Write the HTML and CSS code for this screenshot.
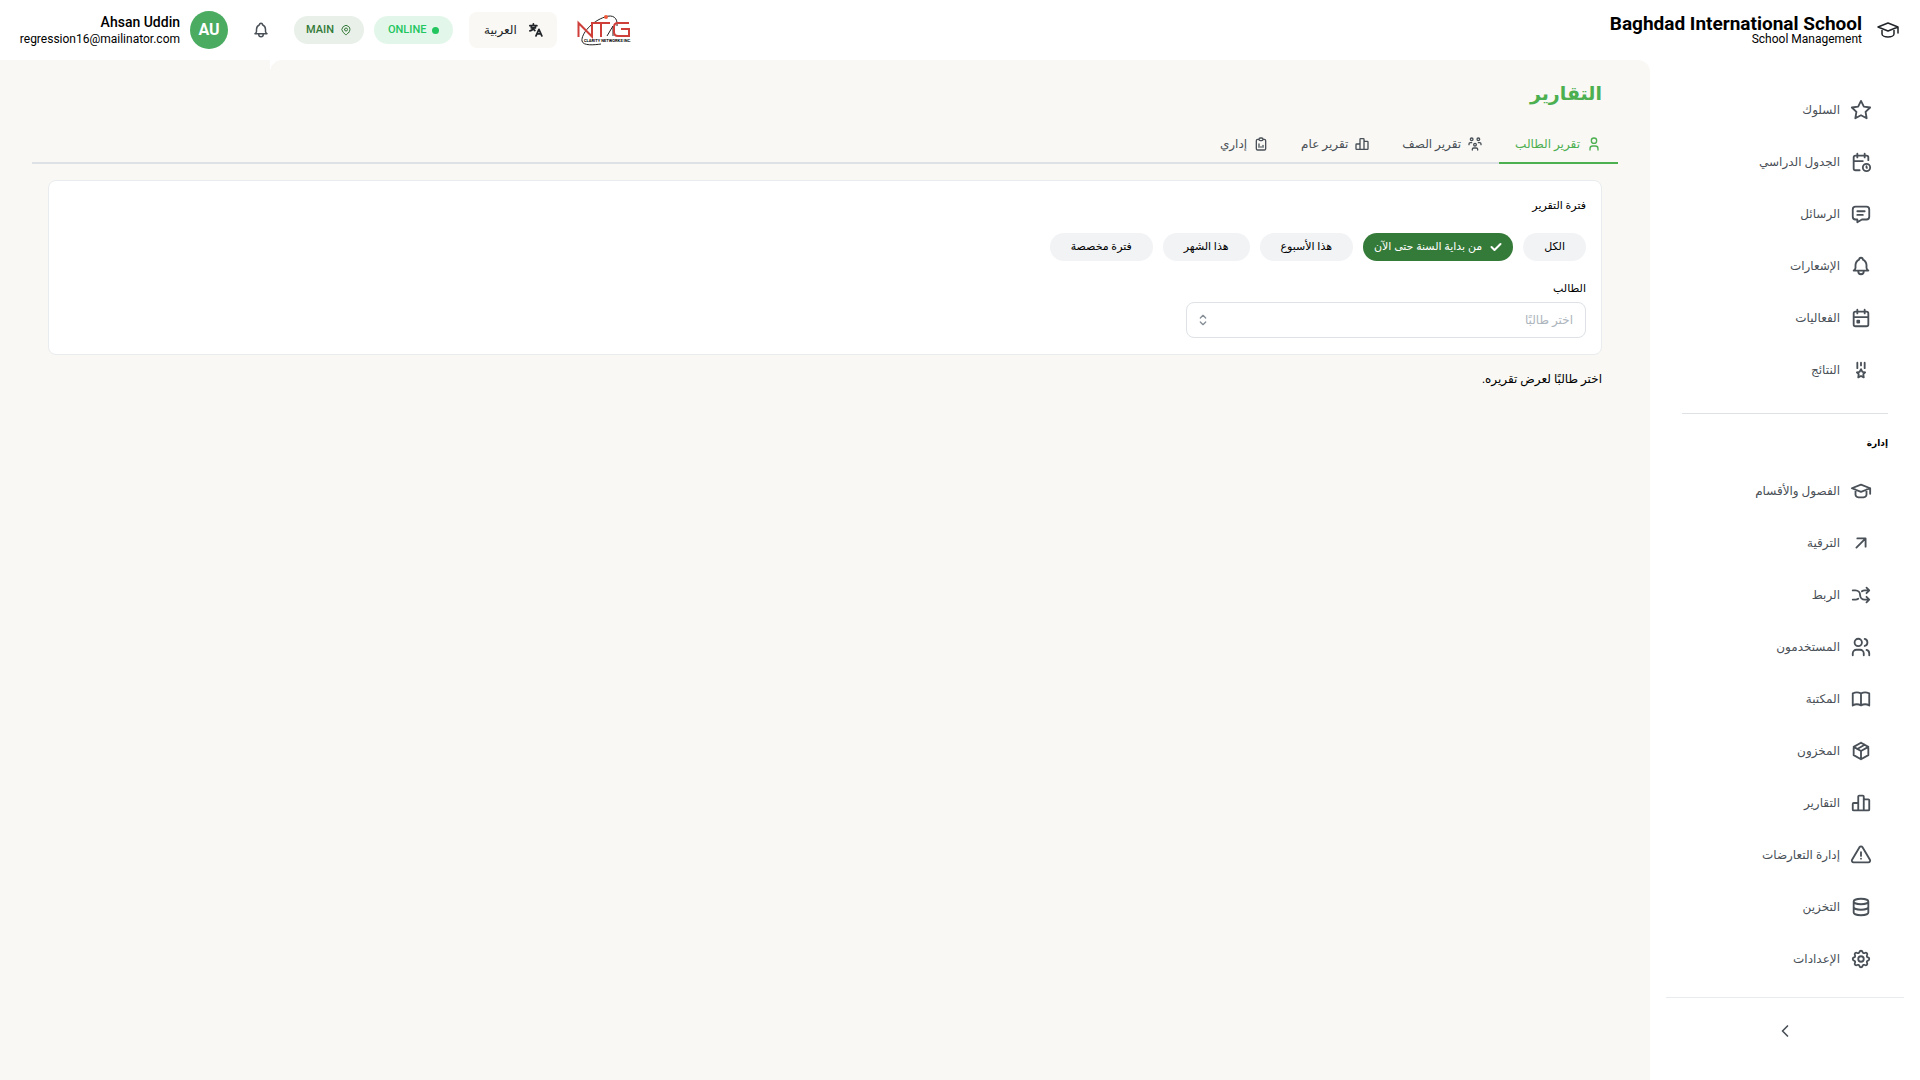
FILE: index.html
```html
<!DOCTYPE html>
<html lang="ar" dir="rtl">
<head>
<meta charset="utf-8">
<title>التقارير</title>
<link rel="stylesheet" href="styles.css">
</head>
<body>
<svg class="sprite" aria-hidden="true">
  <symbol id="star" viewBox="0 0 24 24"><path d="M12 17.75l-6.172 3.245l1.179 -6.873l-5 -4.867l6.9 -1l3.086 -6.253l3.086 6.253l6.9 1l-5 4.867l1.179 6.873z"/></symbol>
  <symbol id="calendar-clock" viewBox="0 0 24 24"><path d="M10.5 21h-4.5a2 2 0 0 1 -2 -2v-12a2 2 0 0 1 2 -2h12a2 2 0 0 1 2 2v3M16 3v4M8 3v4M4 11h10M14 18a4 4 0 1 0 8 0a4 4 0 1 0 -8 0M18 16.5v1.5l.5 .5"/></symbol>
  <symbol id="message" viewBox="0 0 24 24"><path d="M8 9h8M8 13h6M18 4a3 3 0 0 1 3 3v8a3 3 0 0 1 -3 3h-5l-5 3v-3h-2a3 3 0 0 1 -3 -3v-8a3 3 0 0 1 3 -3h12z"/></symbol>
  <symbol id="bell" viewBox="0 0 24 24"><path d="M10 5a2 2 0 1 1 4 0a7 7 0 0 1 4 6v3a4 4 0 0 0 2 3h-16a4 4 0 0 0 2 -3v-3a7 7 0 0 1 4 -6M9 17v1a3 3 0 0 0 6 0v-1"/></symbol>
  <symbol id="calendar-event" viewBox="0 0 24 24"><path d="M4 7a2 2 0 0 1 2 -2h12a2 2 0 0 1 2 2v12a2 2 0 0 1 -2 2h-12a2 2 0 0 1 -2 -2zM16 3v4M8 3v4M4 11h16M8 15h2v2h-2z"/></symbol>
  <symbol id="medal" viewBox="0 0 24 24"><path d="M12 4v3M8 4v6M16 4v6M12 18.5l-3 1.5l.5 -3.5l-2 -2l3 -.5l1.5 -3l1.5 3l3 .5l-2 2l.5 3.5z"/></symbol>
  <symbol id="school" viewBox="0 0 24 24"><path d="M22 9l-10 -4l-10 4l10 4l10 -4v6M6 10.6v5.4a6 3 0 0 0 12 0v-5.4"/></symbol>
  <symbol id="arrow-up-right" viewBox="0 0 24 24"><path d="M17 7l-10 10M8 7h9v9"/></symbol>
  <symbol id="shuffle" viewBox="0 0 24 24"><path d="M18 4l3 3l-3 3M18 20l3 -3l-3 -3M3 7h3a5 5 0 0 1 5 5a5 5 0 0 0 5 5h5M21 7h-5a4.978 4.978 0 0 0 -3 1m-4 8a4.984 4.984 0 0 1 -3 1h-3"/></symbol>
  <symbol id="users" viewBox="0 0 24 24"><path d="M5 7a4 4 0 1 0 8 0a4 4 0 1 0 -8 0M3 21v-2a4 4 0 0 1 4 -4h4a4 4 0 0 1 4 4v2M16 3.13a4 4 0 0 1 0 7.75M21 21v-2a4 4 0 0 0 -3 -3.85"/></symbol>
  <symbol id="book" viewBox="0 0 24 24"><path d="M3 19a9 9 0 0 1 9 0a9 9 0 0 1 9 0M3 6a9 9 0 0 1 9 0a9 9 0 0 1 9 0M3 6v13M12 6v13M21 6v13"/></symbol>
  <symbol id="package" viewBox="0 0 24 24"><path d="M12 3l8 4.5v9l-8 4.5l-8 -4.5v-9l8 -4.5M12 12l8 -4.5M12 12v9M12 12l-8 -4.5M16 5.25l-8 4.5"/></symbol>
  <symbol id="chart-bar" viewBox="0 0 24 24"><path d="M3 13a1 1 0 0 1 1 -1h4a1 1 0 0 1 1 1v6a1 1 0 0 1 -1 1h-4a1 1 0 0 1 -1 -1zM15 9a1 1 0 0 1 1 -1h4a1 1 0 0 1 1 1v10a1 1 0 0 1 -1 1h-4a1 1 0 0 1 -1 -1zM9 5a1 1 0 0 1 1 -1h4a1 1 0 0 1 1 1v14a1 1 0 0 1 -1 1h-4a1 1 0 0 1 -1 -1zM4 20h14"/></symbol>
  <symbol id="alert" viewBox="0 0 24 24"><path d="M12 9v4M10.363 3.591l-8.106 13.534a1.914 1.914 0 0 0 1.636 2.871h16.214a1.914 1.914 0 0 0 1.636 -2.87l-8.106 -13.536a1.914 1.914 0 0 0 -3.274 0zM12 16h.01"/></symbol>
  <symbol id="database" viewBox="0 0 24 24"><path d="M4 6a8 3 0 1 0 16 0a8 3 0 1 0 -16 0M4 6v6a8 3 0 0 0 16 0v-6M4 12v6a8 3 0 0 0 16 0v-6"/></symbol>
  <symbol id="settings" viewBox="0 0 24 24"><path d="M10.325 4.317c.426 -1.756 2.924 -1.756 3.35 0a1.724 1.724 0 0 0 2.573 1.066c1.543 -.94 3.31 .826 2.37 2.37a1.724 1.724 0 0 0 1.065 2.572c1.756 .426 1.756 2.924 0 3.35a1.724 1.724 0 0 0 -1.066 2.573c.94 1.543 -.826 3.31 -2.37 2.37a1.724 1.724 0 0 0 -2.572 1.065c-.426 1.756 -2.924 1.756 -3.35 0a1.724 1.724 0 0 0 -2.573 -1.066c-1.543 .94 -3.31 -.826 -2.37 -2.37a1.724 1.724 0 0 0 -1.065 -2.572c-1.756 -.426 -1.756 -2.924 0 -3.35a1.724 1.724 0 0 0 1.066 -2.573c-.94 -1.543 .826 -3.31 2.37 -2.37c1 .608 2.296 .07 2.572 -1.065zM9 12a3 3 0 1 0 6 0a3 3 0 0 0 -6 0"/></symbol>
  <symbol id="user" viewBox="0 0 24 24"><path d="M8 7a4 4 0 1 0 8 0a4 4 0 0 0 -8 0M6 21v-2a4 4 0 0 1 4 -4h4a4 4 0 0 1 4 4v2"/></symbol>
  <symbol id="users-group" viewBox="0 0 24 24"><path d="M10 13a2 2 0 1 0 4 0a2 2 0 0 0 -4 0M8 21v-1a2 2 0 0 1 2 -2h4a2 2 0 0 1 2 2v1M15 5a2 2 0 1 0 4 0a2 2 0 0 0 -4 0M17 10h2a2 2 0 0 1 2 2v1M5 5a2 2 0 1 0 4 0a2 2 0 0 0 -4 0M3 13v-1a2 2 0 0 1 2 -2h2"/></symbol>
  <symbol id="report" viewBox="0 0 24 24"><path d="M9 5h-2a2 2 0 0 0 -2 2v12a2 2 0 0 0 2 2h10a2 2 0 0 0 2 -2v-12a2 2 0 0 0 -2 -2h-2M9 5a2 2 0 0 1 2 -2h2a2 2 0 0 1 2 2a2 2 0 0 1 -2 2h-2a2 2 0 0 1 -2 -2M9 17v-5M12 17v-1M15 17v-3"/></symbol>
  <symbol id="pin" viewBox="0 0 24 24"><path d="M9 11a3 3 0 1 0 6 0a3 3 0 0 0 -6 0M17.657 16.657l-4.243 4.243a2 2 0 0 1 -2.827 0l-4.244 -4.243a8 8 0 1 1 11.314 0z"/></symbol>
  <symbol id="chevron-left" viewBox="0 0 24 24"><path d="M15 6l-6 6l6 6"/></symbol>
  <symbol id="selector" viewBox="0 0 24 24"><path d="M8 9l4 -4l4 4M16 15l-4 4l-4 -4"/></symbol>
  <symbol id="check" viewBox="0 0 24 24"><path d="M3 12l6 6l12 -12"/></symbol>
  <symbol id="translate" viewBox="0 0 24 24"><path d="M1.500 4.500h12M7.500 1.500v3M4 5v3.500h7V5M7.500 9c-1 2 -3 4 -6 4.500M7.500 9c0 2 1 3 2.500 4M12 22l5 -11l5 11M14 18.500h6"/></symbol>
</svg>

<header class="topbar">
  <div class="brand">
    <svg class="icon icon-brand"><use href="#school"/></svg>
    <div class="brand-text">
      <strong class="brand-name">Baghdad International School</strong>
      <span class="brand-sub">School Management</span>
    </div>
  </div>
  <div class="tools">
    <svg class="logo" viewBox="0 0 54 32" role="img" aria-label="NTG Clarity Networks Inc.">
      <path class="logo-orbit" d="M40 12C41 4 36 0 28 3C15 7 4 20 5 27C6 32 17 31 24 30"/>
      <path class="logo-orbit" d="M30 22L36 12V22"/>
      <path class="logo-mark" d="M1.500 23V9L15 22.500V9H33M24 9V23M52 9H41C38 9 37 10 37 13V18C37 21 38 22 41 22H52V15H44"/>
      <circle class="logo-dot" cx="29" cy="3" r="2"/>
      <text class="logo-text" x="7" y="28">CLARITY NETWORKS INC.</text>
    </svg>
    <button class="language" type="button"><svg class="icon icon-language"><use href="#translate"/></svg><span>العربية</span></button>
    <div class="badges">
      <span class="badge badge-online"><i class="dot"></i>ONLINE</span>
      <span class="badge badge-main"><svg class="icon icon-pin"><use href="#pin"/></svg>MAIN</span>
    </div>
    <button class="bell" type="button" aria-label="الإشعارات"><svg class="icon icon-bell"><use href="#bell"/></svg></button>
    <div class="account">
      <span class="avatar">AU</span>
      <div class="account-text">
        <span class="account-name">Ahsan Uddin</span>
        <span class="account-mail">regression16@mailinator.com</span>
      </div>
    </div>
  </div>
</header>

<div class="shell">
  <aside class="sidebar">
    <nav class="nav">
      <a class="nav-item" href="#"><svg class="icon icon-nav"><use href="#star"/></svg><span>السلوك</span></a>
      <a class="nav-item" href="#"><svg class="icon icon-nav"><use href="#calendar-clock"/></svg><span>الجدول الدراسي</span></a>
      <a class="nav-item" href="#"><svg class="icon icon-nav"><use href="#message"/></svg><span>الرسائل</span></a>
      <a class="nav-item" href="#"><svg class="icon icon-nav"><use href="#bell"/></svg><span>الإشعارات</span></a>
      <a class="nav-item" href="#"><svg class="icon icon-nav"><use href="#calendar-event"/></svg><span>الفعاليات</span></a>
      <a class="nav-item" href="#"><svg class="icon icon-nav"><use href="#medal"/></svg><span>النتائج</span></a>
      <hr class="nav-rule">
      <h2 class="nav-title">إدارة</h2>
      <a class="nav-item" href="#"><svg class="icon icon-nav"><use href="#school"/></svg><span>الفصول والأقسام</span></a>
      <a class="nav-item" href="#"><svg class="icon icon-nav"><use href="#arrow-up-right"/></svg><span>الترقية</span></a>
      <a class="nav-item" href="#"><svg class="icon icon-nav"><use href="#shuffle"/></svg><span>الربط</span></a>
      <a class="nav-item" href="#"><svg class="icon icon-nav"><use href="#users"/></svg><span>المستخدمون</span></a>
      <a class="nav-item" href="#"><svg class="icon icon-nav"><use href="#book"/></svg><span>المكتبة</span></a>
      <a class="nav-item" href="#"><svg class="icon icon-nav"><use href="#package"/></svg><span>المخزون</span></a>
      <a class="nav-item" href="#"><svg class="icon icon-nav"><use href="#chart-bar"/></svg><span>التقارير</span></a>
      <a class="nav-item" href="#"><svg class="icon icon-nav"><use href="#alert"/></svg><span>إدارة التعارضات</span></a>
      <a class="nav-item" href="#"><svg class="icon icon-nav"><use href="#database"/></svg><span>التخزين</span></a>
      <a class="nav-item" href="#"><svg class="icon icon-nav"><use href="#settings"/></svg><span>الإعدادات</span></a>
    </nav>
    <div class="sidebar-foot">
      <button class="collapse" type="button" aria-label="طي القائمة"><svg class="icon icon-collapse"><use href="#chevron-left"/></svg></button>
    </div>
  </aside>

  <main class="content">
    <h1 class="title">التقارير</h1>
    <div class="tabs" role="tablist">
      <button class="tab tab-active" type="button" role="tab" aria-selected="true"><svg class="icon icon-tab"><use href="#user"/></svg><span>تقرير الطالب</span></button>
      <button class="tab" type="button" role="tab"><svg class="icon icon-tab"><use href="#users-group"/></svg><span>تقرير الصف</span></button>
      <button class="tab" type="button" role="tab"><svg class="icon icon-tab"><use href="#chart-bar"/></svg><span>تقرير عام</span></button>
      <button class="tab" type="button" role="tab"><svg class="icon icon-tab"><use href="#report"/></svg><span>إداري</span></button>
    </div>
    <section class="card">
      <fieldset class="period">
        <legend class="label">فترة التقرير</legend>
        <div class="chips">
          <label class="chip"><input type="radio" name="period"><span>الكل</span></label>
          <label class="chip chip-on"><input type="radio" name="period" checked><svg class="icon icon-check"><use href="#check"/></svg><span>من بداية السنة حتى الآن</span></label>
          <label class="chip"><input type="radio" name="period"><span>هذا الأسبوع</span></label>
          <label class="chip"><input type="radio" name="period"><span>هذا الشهر</span></label>
          <label class="chip"><input type="radio" name="period"><span>فترة مخصصة</span></label>
        </div>
      </fieldset>
      <div class="field">
        <label class="label" for="student">الطالب</label>
        <div class="select">
          <input class="select-input" id="student" type="text" placeholder="اختر طالبًا">
          <svg class="icon icon-selector"><use href="#selector"/></svg>
        </div>
      </div>
    </section>
    <p class="hint">اختر طالبًا لعرض تقريره.</p>
  </main>
</div>
</body>
</html>
```
FILE: styles.css
```css
* { box-sizing: border-box; }
body {
  margin: 0;
  min-height: 100vh;
  display: flex;
  flex-direction: column;
  background: #fff;
  color: #000;
  font-family: Roboto, "DejaVu Sans", sans-serif;
  font-size: 12px;
  line-height: 20px;
}
button { border: 0; background: none; padding: 0; font: inherit; color: inherit; }
.sprite { position: absolute; width: 0; height: 0; }
.icon { flex: none; fill: none; stroke: currentColor; stroke-width: 2; stroke-linecap: round; stroke-linejoin: round; }

.topbar { display: flex; justify-content: space-between; align-items: center; height: 60px; padding: 0 20px 0 16px; }
.brand { display: flex; align-items: center; gap: 14px; }
.icon-brand { width: 24px; height: 24px; color: #212529; stroke-width: 1.5; }
.brand-text { display: flex; flex-direction: column; align-items: flex-start; }
.brand-name { font-size: 19px; line-height: 18px; }
.brand-sub { font-size: 12px; line-height: 12px; }
.tools { display: flex; align-items: center; }
.logo { width: 54px; height: 32px; margin-left: 20px; }
.logo-mark { fill: none; stroke: #cf3f3a; stroke-width: 2; }
.logo-orbit { fill: none; stroke: #222; stroke-width: 1; }
.logo-dot { fill: #ef5a3c; }
.logo-text { font-family: Roboto, sans-serif; font-size: 4px; font-weight: 700; direction: ltr; }
.language { display: flex; align-items: center; justify-content: center; gap: 12px; width: 88px; height: 36px; border-radius: 8px; background: #f9f8f4; margin-left: 16px; color: #212529; }
.icon-language { width: 14px; height: 14px; stroke-width: 3; }
.badges { display: flex; gap: 10px; margin-left: 24px; }
.badge { display: flex; align-items: center; gap: 6px; height: 28px; padding: 0 12px; border-radius: 14px; font-size: 11px; font-weight: 500; }
.badge-online { background: #e2f7ea; color: #22c55e; padding: 0 14px; }
.badge-main { background: #e8f0e9; color: #347a38; }
.dot { width: 7px; height: 7px; border-radius: 50%; background: currentColor; }
.icon-pin { width: 12px; height: 12px; }
.bell { display: flex; margin-left: 24px; color: #495057; }
.icon-bell { width: 18px; height: 18px; }
.account { display: flex; align-items: center; gap: 10px; }
.avatar { display: grid; place-items: center; width: 38px; height: 38px; border-radius: 50%; background: #4aab61; color: #fff; font-weight: 700; font-size: 16px; }
.account-text { display: flex; flex-direction: column; align-items: flex-start; min-width: 164px; }
.account-name { font-size: 14px; line-height: 18px; font-weight: 500; }
.account-mail { font-size: 12px; line-height: 16px; }

.shell { flex: 1; display: flex; }
.sidebar { flex: none; width: 270px; display: flex; flex-direction: column; padding: 24px 16px 0; }
.nav { display: flex; flex-direction: column; padding: 0 16px; }
.nav-item { display: flex; align-items: center; gap: 10px; height: 52px; padding: 0 16px; color: #495057; text-decoration: none; }
.icon-nav { width: 22px; height: 22px; }
.nav-rule { width: 100%; margin: 17px 0 19px; border: 0; border-top: 1px solid #dee2e6; }
.nav-title { margin: 0 0 12px; font-size: 9px; line-height: 20px; }
.sidebar-foot { display: flex; justify-content: center; border-top: 1px solid #e9ecef; margin-top: 12px; padding-top: 23px; }
.collapse { display: flex; color: #495057; }
.icon-collapse { width: 20px; height: 20px; }

.content { position: relative; flex: 1; min-width: 0; background: #f9f8f4; border-top-right-radius: 12px; padding: 16px 32px; }
.content::before { content: ""; position: absolute; top: 0; left: 270px; width: 12px; height: 12px; background: radial-gradient(circle at 100% 100%, transparent 12px, #fff 12px); }
.title { margin: 0 16px 14px; font-size: 19px; line-height: 36px; color: #4caf50; }
.tabs { display: flex; height: 38px; border-bottom: 2px solid #dee2e6; }
.tab { display: flex; align-items: center; gap: 6px; padding: 0 16px; margin-bottom: -2px; border-bottom: 2px solid transparent; color: #495057; }
.tab-active { color: #4caf50; border-color: #4caf50; }
.icon-tab { width: 16px; height: 16px; }
.card { margin: 16px 16px 0; padding: 15px 15px 16px; background: #fff; border: 1px solid #e9ecef; border-radius: 8px; }
.period { border: 0; margin: 0; padding: 0; }
.label { display: block; padding: 0; font-size: 11px; line-height: 20px; }
.chips { display: flex; flex-wrap: wrap; gap: 10px; margin: 17px 0 18px; }
.chip { display: flex; align-items: center; gap: 8px; height: 28px; padding: 0 21px; border-radius: 14px; background: #f1f3f5; font-size: 11px; }
.chip input { position: absolute; opacity: 0; }
.chip-on { background: #347a38; color: #fff; padding: 0 11px; }
.icon-check { width: 12px; height: 12px; stroke-width: 4; }
.select { display: flex; align-items: center; width: 400px; height: 36px; margin-top: 3px; padding: 0 12px 0 8px; border: 1px solid #dee2e6; border-radius: 8px; }
.select-input { flex: 1; min-width: 0; border: 0; outline: 0; background: none; padding: 0; font: inherit; }
.select-input::placeholder { color: #adb5bd; }
.icon-selector { width: 16px; height: 16px; color: #868e96; }
.hint { margin: 14px 16px 0; line-height: 20px; }
```
